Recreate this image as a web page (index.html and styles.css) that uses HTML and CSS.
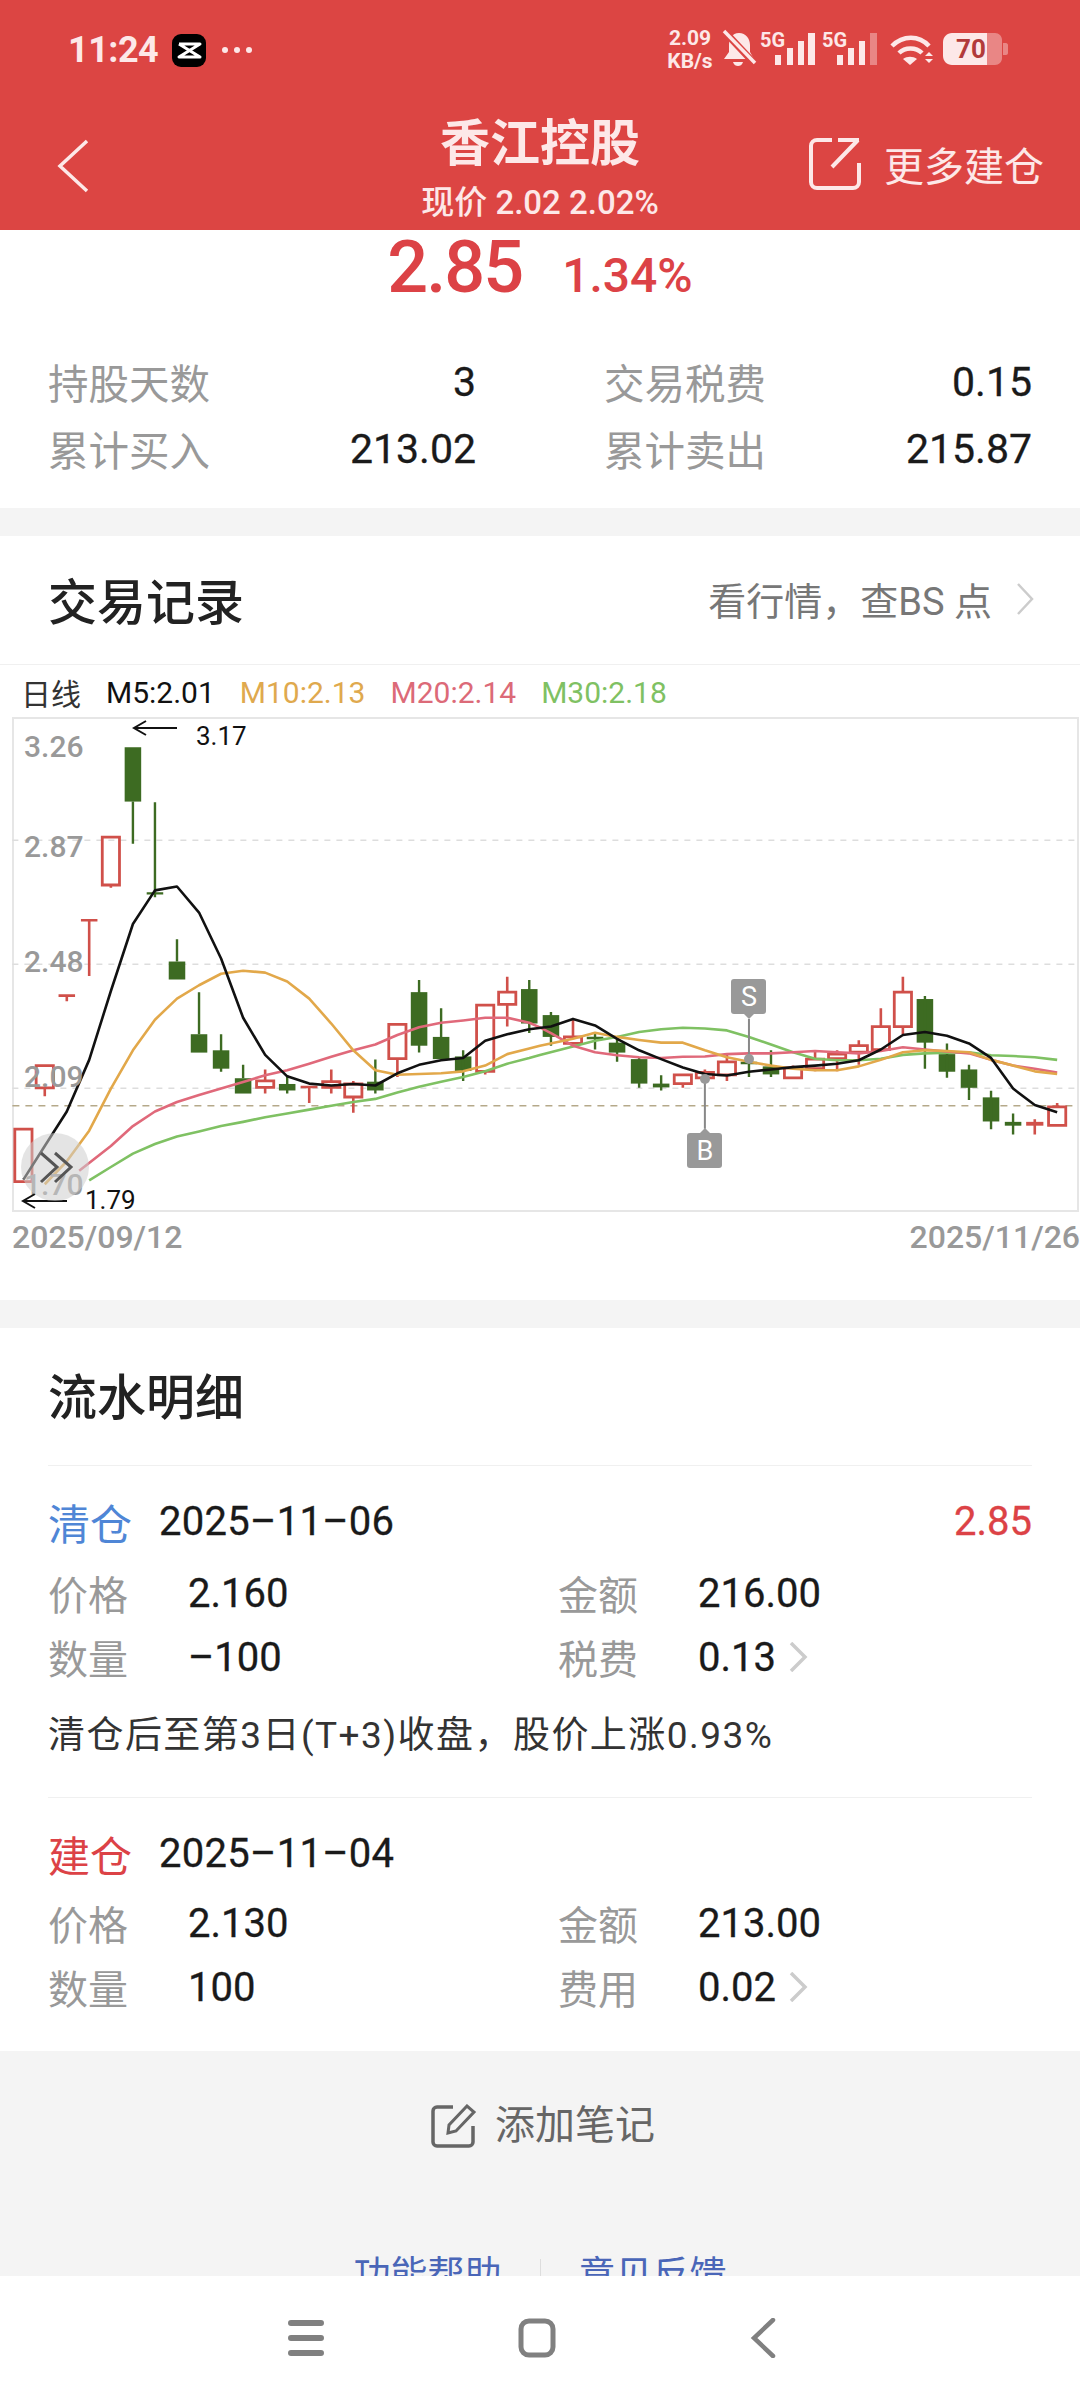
FILE: index.html
```html
<!DOCTYPE html>
<html lang="zh-CN">
<head>
<meta charset="UTF-8">
<title>香江控股</title>
<link rel="stylesheet" href="styles.css">
</head>
<body>
<div class="page">
  <header class="top">
    <div class="status">
      <div class="status-left">
        <span class="clock">11:24</span>
        <svg class="app-icon" width="34" height="33" viewBox="0 0 34 33">
          <rect width="34" height="33" rx="9" fill="#000"/>
          <path d="M7 10H28L7 23H28L7 10" fill="none" stroke="#fff" stroke-width="3" stroke-linejoin="round"/>
        </svg>
        <span class="dots"><i></i><i></i><i></i></span>
      </div>
      <svg class="status-right" width="365" height="60" viewBox="650 20 365 60">
        <text class="net" x="690" y="45" text-anchor="middle">2.09</text>
        <text class="net" x="690" y="68" text-anchor="middle">KB/s</text>
        <path d="M739 33c-7 0-10 6-10 12v7l-5 7h30l-4-7v-7c0-6-4-12-11-12z" fill="#fde8e8"/>
        <path d="M733 62c1 3 3 4 5 4s4-1 5-4z" fill="#fde8e8"/>
        <path d="M724 31L754 63" stroke="#dc4543" stroke-width="7"/>
        <path d="M724 31L755 63" stroke="#fde8e8" stroke-width="3.5"/>
        <text class="five-g" x="760" y="47">5G</text>
        <path d="M775 55h6v10h-6zM787 48h6v17h-6zM798 41h6v24h-6zM808 33h7v32h-7z" fill="#fde8e8"/>
        <text class="five-g" x="822" y="47">5G</text>
        <path d="M837 55h6v10h-6zM848 48h6v17h-6zM859 41h6v24h-6z" fill="#fde8e8"/>
        <path d="M870 33h7v32h-7z" fill="#fde8e8" opacity=".4"/>
        <path d="M892 46c11-11 27-11 37 0M899 53c6-6 17-6 23 0" fill="none" stroke="#fde8e8" stroke-width="4.5"/>
        <path d="M903 59l7 6 7-6c-4-3-10-3-14 0z" fill="#fde8e8"/>
        <path d="M925 56l4-4 4 4zM925 59h8l-4 4z" fill="#fde8e8"/>
        <path d="M987 33h8c4 0 7 3 7 7v18c0 4-3 7-7 7h-8zM1003 43h3c1 0 2 1 2 2v8c0 1-1 2-2 2h-3z" fill="#fde8e8" opacity=".4"/>
        <path d="M987 33h-35c-5 0-9 4-9 9v14c0 5 4 9 9 9h35z" fill="#fde8e8"/>
        <text class="batt" x="971" y="58" text-anchor="middle">70</text>
      </svg>
    </div>
    <div class="title-bar">
      <svg class="back" width="32" height="54" viewBox="0 0 32 54">
        <path d="M30 2L3 27L30 52" fill="none" stroke="#fde8e8" stroke-width="3.5"/>
      </svg>
      <div class="title-mid">
        <h1 class="stock">香江控股</h1>
        <p class="quote">现价 2.02 2.02%</p>
      </div>
      <div class="more">
        <svg width="54" height="54" viewBox="0 0 54 54">
          <path d="M24 3H9a6 6 0 0 0-6 6V45a6 6 0 0 0 6 6H45a6 6 0 0 0 6-6V26M24 30L50 3M30 3H51" fill="none" stroke="#fde8e8" stroke-width="4"/>
        </svg>
        <span>更多建仓</span>
      </div>
    </div>
  </header>

  <main class="content">
    <section class="summary">
      <div class="profit">
        <span class="profit-num">2.85</span>
        <span class="profit-pct">1.34%</span>
      </div>
      <div class="stats">
        <div class="stat"><span class="lbl">持股天数</span><span class="val">3</span></div>
        <div class="stat"><span class="lbl">交易税费</span><span class="val">0.15</span></div>
        <div class="stat"><span class="lbl">累计买入</span><span class="val">213.02</span></div>
        <div class="stat"><span class="lbl">累计卖出</span><span class="val">215.87</span></div>
      </div>
    </section>

    <section class="card records">
      <div class="records-head">
        <h2 class="card-title">交易记录</h2>
        <div class="records-link">
          <span>看行情，查BS 点</span>
          <svg width="18" height="34" viewBox="0 0 18 34"><path d="M2 2L16 17L2 32" fill="none" stroke="#ccc" stroke-width="2.5"/></svg>
        </div>
      </div>
      <div class="legend">
        <span class="lg-day">日线</span>
        <span class="lg-m5">M5:2.01</span>
        <span class="lg-m10">M10:2.13</span>
        <span class="lg-m20">M20:2.14</span>
        <span class="lg-m30">M30:2.18</span>
      </div>

      <svg class="chart" width="1080" height="500" viewBox="0 57 1080 500">
        <rect class="frame" x="13" y="58" width="1065" height="493"/>
        <g transform="scale(.34435 .38265)">
          <path class="grid" d="M36 471H3130M36 795H3130M36 1119H3130"/>
          <path class="price-line" d="M36 1165H3130"/>

          <g class="up">
            <rect x="43" y="1226" width="50" height="137"/>
            <rect x="105" y="1060" width="50" height="58"/>
            <rect x="297" y="463" width="50" height="125"/>
            <rect x="745" y="1100" width="50" height="17"/>
            <rect x="937" y="1102" width="50" height="15"/>
            <rect x="1001" y="1108" width="50" height="34"/>
            <rect x="1129" y="952" width="50" height="90"/>
            <rect x="1384" y="902" width="50" height="173"/>
            <rect x="1448" y="868" width="50" height="32"/>
            <rect x="1639" y="985" width="50" height="17"/>
            <rect x="1958" y="1084" width="50" height="23"/>
            <rect x="2022" y="1078" width="50" height="14"/>
            <rect x="2086" y="1050" width="50" height="34"/>
            <rect x="2278" y="1066" width="50" height="26"/>
            <rect x="2342" y="1043" width="50" height="25"/>
            <rect x="2406" y="1030" width="50" height="12"/>
            <rect x="2469" y="1008" width="50" height="17"/>
            <rect x="2533" y="958" width="50" height="60"/>
            <rect x="2597" y="868" width="50" height="90"/>
            <rect class="flat" x="2980" y="1207" width="50" height="10"/>
            <rect x="3045" y="1168" width="50" height="48"/>
            <path d="M130 1118V1140M170 877H218M194 877V892M235 680H283M259 680V826M322 588V595M770 1070V1100M770 1117V1133M873 1116H922M898 1116V1158M962 1070V1102M962 1117V1133M1026 1100V1108M1026 1142V1183M1154 1042V1090M1409 1075V1083M1473 828V868M1473 900V958M1664 938V985M1983 1107V1118M2047 1070V1078M2111 1028V1050M2111 1084V1100M2303 1060V1066M2367 1022V1043M2367 1068V1075M2431 1020V1030M2431 1042V1075M2494 994V1008M2494 1025V1058M2558 910V958M2622 828V868M2622 958V978M3005 1200V1240M3070 1158V1168"/>
          </g>

          <g class="down">
            <rect x="362" y="228" width="48" height="142"/>
            <rect x="490" y="788" width="48" height="47"/>
            <rect x="554" y="978" width="48" height="48"/>
            <rect x="618" y="1020" width="48" height="48"/>
            <rect x="682" y="1093" width="48" height="40"/>
            <rect x="810" y="1108" width="48" height="17"/>
            <rect x="1066" y="1102" width="48" height="23"/>
            <rect x="1193" y="868" width="48" height="140"/>
            <rect x="1257" y="985" width="48" height="58"/>
            <rect x="1321" y="1036" width="48" height="38"/>
            <rect x="1513" y="860" width="48" height="90"/>
            <rect x="1576" y="928" width="48" height="57"/>
            <rect x="1768" y="1000" width="48" height="26"/>
            <rect x="1832" y="1043" width="48" height="64"/>
            <rect x="1896" y="1107" width="48" height="10"/>
            <rect x="2215" y="1062" width="48" height="21"/>
            <rect x="2662" y="886" width="48" height="114"/>
            <rect x="2726" y="1030" width="48" height="46"/>
            <rect x="2790" y="1070" width="48" height="48"/>
            <rect x="2854" y="1143" width="48" height="63"/>
            <rect x="2918" y="1207" width="48" height="10"/>
            <path d="M386 370V480M426 610H474M450 372V620M514 730V788M578 868V978M642 978V1076M706 1058V1093M834 1085V1133M1090 1044V1133M1217 836V1026M1281 910V985M1345 1020V1100M1537 836V975M1600 920V1008M1704 988H1752M1728 975V1018M1792 985V1050M1856 1040V1118M1920 1085V1125M2151 1053H2199M2175 1030V1090M2239 1020V1090M2686 878V1068M2750 1002V1092M2814 1058V1150M2878 1126V1226M2942 1185V1240"/>
          </g>

          <polyline class="ma m30" points="259,1360 322,1325 386,1290 450,1265 514,1245 578,1232 642,1218 706,1207 770,1195 834,1185 898,1175 962,1165 1026,1155 1090,1147 1154,1130 1217,1115 1281,1102 1345,1090 1409,1075 1473,1055 1537,1040 1568,1032 1664,1010 1728,995 1792,985 1856,972 1920,965 1983,961 2047,963 2111,968 2175,985 2239,1005 2303,1025 2367,1042 2431,1046 2494,1046 2558,1042 2622,1032 2686,1028 2750,1026 2814,1025 2878,1033 2942,1035 3005,1038 3070,1045"/>
          <polyline class="ma m20" points="230,1335 322,1270 386,1218 450,1180 514,1155 578,1137 642,1120 706,1103 770,1085 834,1072 898,1055 962,1037 1026,1020 1090,1005 1154,980 1217,960 1281,948 1345,942 1409,935 1473,935 1537,948 1568,960 1600,975 1664,1008 1728,1025 1792,1033 1856,1038 1920,1040 1983,1037 2047,1036 2111,1030 2175,1028 2239,1028 2303,1025 2367,1022 2431,1025 2494,1028 2558,1022 2622,1012 2686,1018 2750,1023 2814,1028 2878,1045 2942,1060 3005,1068 3070,1078"/>
          <polyline class="ma m10" points="130,1370 194,1310 259,1230 322,1120 386,1020 450,940 514,885 578,850 642,820 706,812 770,817 834,840 898,885 962,950 1026,1020 1090,1072 1154,1084 1217,1082 1281,1080 1345,1075 1409,1060 1473,1030 1537,1015 1568,1008 1664,990 1728,974 1792,985 1856,993 1920,1000 1983,1000 2047,1020 2111,1038 2175,1050 2239,1060 2303,1068 2367,1072 2431,1072 2494,1062 2558,1045 2622,1025 2686,1020 2750,1022 2814,1025 2878,1045 2942,1060 3005,1075 3070,1082"/>
          <polyline class="ma m5" points="68,1358 130,1270 194,1180 259,1045 322,865 386,690 450,602 514,592 578,660 642,780 706,935 770,1032 834,1088 898,1107 962,1112 1026,1108 1090,1112 1154,1080 1217,1058 1281,1046 1345,1040 1409,995 1473,978 1537,965 1600,958 1664,938 1728,955 1792,990 1856,1020 1920,1043 1983,1065 2047,1082 2111,1086 2175,1076 2239,1070 2303,1064 2367,1060 2431,1055 2494,1046 2558,1018 2622,980 2686,972 2750,982 2814,1002 2878,1040 2942,1120 3005,1163 3070,1182"/>

          <path class="pin" d="M2175 938V1040M2047 1095V1225"/>
        </g>

        <circle class="pin-dot" cx="749" cy="399" r="5"/>
        <circle class="pin-dot" cx="705" cy="419" r="5"/>
        <rect class="tag" x="731" y="319" width="35" height="35" rx="3"/>
        <path class="tag" d="M744 354l5 5 5-5z"/>
        <text class="tag-text" x="749" y="346">S</text>
        <rect class="tag" x="687" y="473" width="35" height="35" rx="3"/>
        <path class="tag" d="M700 473l5-5 5 5z"/>
        <text class="tag-text" x="705" y="500">B</text>

        <text class="axis" x="24" y="97">3.26</text>
        <text class="axis" x="24" y="197">2.87</text>
        <text class="axis" x="24" y="312">2.48</text>
        <text class="axis" x="24" y="427">2.09</text>
        <text class="axis" x="24" y="535">1.70</text>

        <path class="arrow" d="M177 68H134M146 61L134 68L146 75"/>
        <text class="peak" x="196" y="85">3.17</text>
        <path class="arrow" d="M67 541H23M35 534L23 541L35 548"/>
        <text class="peak" x="85" y="549">1.79</text>

        <circle class="fold" cx="55" cy="507" r="34"/>
        <path class="fold-arrow" d="M41 493L57 507L41 522M55 493L71 507L55 522"/>
      </svg>

      <div class="dates"><span>2025/09/12</span><span>2025/11/26</span></div>
    </section>

    <section class="card flow">
      <h2 class="flow-title">流水明细</h2>

      <div class="trade">
        <div class="trade-head">
          <span class="kind kind-sell">清仓</span>
          <span class="trade-date">2025–11–06</span>
          <span class="trade-gain">2.85</span>
        </div>
        <div class="trade-grid">
          <span class="lbl">价格</span><span class="val">2.160</span>
          <span class="lbl">金额</span><span class="val">216.00</span>
          <span class="lbl">数量</span><span class="val">–100</span>
          <span class="lbl">税费</span>
          <span class="val">0.13
            <svg class="go" width="20" height="30" viewBox="0 0 20 30"><path d="M3 1L17 15L3 29" fill="none" stroke="#ccc" stroke-width="3.5"/></svg>
          </span>
        </div>
        <p class="trade-note">清仓后至第3日(T+3)收盘，股价上涨0.93%</p>
      </div>

      <div class="trade trade-last">
        <div class="trade-head">
          <span class="kind kind-buy">建仓</span>
          <span class="trade-date">2025–11–04</span>
        </div>
        <div class="trade-grid">
          <span class="lbl">价格</span><span class="val">2.130</span>
          <span class="lbl">金额</span><span class="val">213.00</span>
          <span class="lbl">数量</span><span class="val">100</span>
          <span class="lbl">费用</span>
          <span class="val">0.02
            <svg class="go" width="20" height="30" viewBox="0 0 20 30"><path d="M3 1L17 15L3 29" fill="none" stroke="#ccc" stroke-width="3.5"/></svg>
          </span>
        </div>
      </div>
    </section>

    <section class="bottom">
      <div class="add-note">
        <svg width="46" height="44" viewBox="0 0 46 44">
          <path d="M22 3H6a4 4 0 0 0-4 4V38a4 4 0 0 0 4 4H38a4 4 0 0 0 4-4V22" fill="none" stroke="#666" stroke-width="3.5"/>
          <path d="M17 29L18 21L36 2L43 8L25 27z" fill="none" stroke="#666" stroke-width="3"/>
        </svg>
        <span>添加笔记</span>
      </div>
      <div class="help-links">
        <span>功能帮助</span>
        <i></i>
        <span>意见反馈</span>
      </div>
    </section>
  </main>

  <nav class="sys-nav">
    <svg width="36" height="36" viewBox="0 0 36 36">
      <path d="M3 3H33M3 18H33M3 33H33" stroke="#808080" stroke-width="6" stroke-linecap="round"/>
    </svg>
    <svg width="38" height="40" viewBox="0 0 38 40">
      <rect x="3" y="3" width="32" height="34" rx="8" fill="none" stroke="#808080" stroke-width="5"/>
    </svg>
    <svg width="26" height="40" viewBox="0 0 26 40">
      <path d="M23 2L4 20L23 38" fill="none" stroke="#808080" stroke-width="4.5" stroke-linecap="round"/>
    </svg>
  </nav>
</div>
</body>
</html>
```

FILE: styles.css
```css
body {
  margin: 0;
  font-family: Roboto, "Noto Sans CJK SC", sans-serif;
  background: #fff;
  color: #222;
}

h1, h2, p {
  margin: 0;
}

.page {
  width: 1080px;
  height: 2400px;
  display: flex;
  flex-direction: column;
  overflow: hidden;
}

/* red header */
.top {
  height: 230px;
  flex-shrink: 0;
  background: #dc4543;
  color: #fde8e8;
}

.status {
  height: 100px;
  display: flex;
  justify-content: space-between;
  align-items: center;
  padding: 0 65px 0 68px;
}

.status-left {
  display: flex;
  align-items: center;
}

.clock {
  font-size: 36px;
  font-weight: 700;
  letter-spacing: -0.5px;
  margin-right: 14px;
}

.dots {
  display: flex;
  gap: 6px;
  margin-left: 16px;
}

.dots i {
  width: 6px;
  height: 6px;
  border-radius: 50%;
  background: #fde8e8;
}

.status-right text {
  fill: #fde8e8;
  font-weight: 700;
}

.status-right .net {
  font-size: 21px;
}

.status-right .five-g {
  font-size: 20px;
}

.status-right .batt {
  font-size: 26px;
  fill: #b23a3a;
}

.title-bar {
  height: 130px;
  display: grid;
  grid-template-columns: 1fr auto 1fr;
  align-items: center;
  padding: 0 36px;
}

.back {
  margin: 1px 0 0 21px;
}

.title-mid {
  text-align: center;
}

.stock {
  font-size: 50px;
  font-weight: 700;
  line-height: 74px;
}

.quote {
  font-size: 33px;
  font-weight: 500;
  line-height: 40px;
  margin-top: 2px;
}

.more {
  display: flex;
  justify-content: flex-end;
  align-items: center;
  gap: 22px;
  font-size: 40px;
  margin-top: -2px;
}

.content {
  flex: 1;
  min-height: 0;
  background: #f4f4f4;
}

.card {
  background: #fff;
  margin-bottom: 28px;
}

/* summary */
.summary {
  height: 278px;
  background: #fff;
  margin-bottom: 28px;
}

.profit {
  height: 76px;
  display: flex;
  justify-content: center;
  align-items: baseline;
  gap: 40px;
  color: #dc4246;
  font-weight: 500;
}

.profit-num {
  font-size: 72px;
  line-height: 76px;
  letter-spacing: -2px;
}

.profit-pct {
  font-size: 48px;
}

.stats {
  display: grid;
  grid-template-columns: 428px 428px;
  grid-auto-rows: 67px;
  justify-content: space-between;
  padding: 0 48px;
  margin-top: 42px;
}

.stat {
  display: flex;
  justify-content: space-between;
  align-items: center;
}

.lbl {
  font-size: 40.5px;
  color: #999;
}

.val {
  font-size: 41px;
  color: #1a1a1a;
  -webkit-text-stroke: 0.3px #1a1a1a;
}

/* trade records + chart */
.records {
  height: 764px;
}

.records-head {
  height: 129px;
  display: flex;
  justify-content: space-between;
  align-items: center;
  padding: 0 46px 3px 48px;
  border-bottom: 1px solid #f0f0f0;
  box-sizing: border-box;
}

.card-title,
.flow-title {
  font-size: 49px;
  font-weight: 500;
  color: #222;
}

.records-link {
  display: flex;
  align-items: center;
  gap: 24px;
  font-size: 38px;
  color: #777;
}

.legend {
  height: 52px;
  box-sizing: border-box;
  padding: 2px 0 0 21px;
  display: flex;
  align-items: center;
  gap: 25px;
  font-size: 30px;
}

.lg-day { color: #333; }
.lg-m5 { color: #111; }
.lg-m10 { color: #dfa94e; }
.lg-m20 { color: #dc6a78; }
.lg-m30 { color: #7fc163; }

.chart {
  display: block;
}

.frame {
  fill: none;
  stroke: #e6e6e6;
  stroke-width: 2;
}

.chart g * {
  vector-effect: non-scaling-stroke;
}

.grid {
  stroke: #ddd;
  stroke-width: 1.5;
  stroke-dasharray: 6 6;
}

.price-line {
  stroke: #b5a98a;
  stroke-width: 1.5;
  stroke-dasharray: 7 6;
}

.up rect {
  fill: none;
  stroke: #d0504a;
  stroke-width: 2.8;
}

.up .flat {
  fill: #d0504a;
  stroke: none;
}

.up path {
  fill: none;
  stroke: #d0504a;
  stroke-width: 2.6;
}

.down rect {
  fill: #3d6b22;
}

.down path {
  fill: none;
  stroke: #3d6b22;
  stroke-width: 2.4;
}

.ma {
  fill: none;
  stroke-width: 2.6;
  stroke-linejoin: round;
}

.m5 { stroke: #111; }
.m10 { stroke: #e2a84a; }
.m20 { stroke: #e0697a; }
.m30 { stroke: #7fc163; }

.pin {
  fill: none;
  stroke: #888;
  stroke-width: 2;
}

.pin-dot,
.tag {
  fill: #999;
}

.tag-text {
  font-size: 27px;
  fill: #fff;
  text-anchor: middle;
}

.axis {
  font-size: 30px;
  font-weight: 500;
  fill: #999;
}

.peak {
  font-size: 26px;
  fill: #111;
}

.arrow {
  fill: none;
  stroke: #111;
  stroke-width: 2;
}

.fold {
  fill: rgba(205, 205, 205, 0.55);
}

.fold-arrow {
  fill: none;
  stroke: #555;
  stroke-width: 3;
}

.dates {
  display: flex;
  justify-content: space-between;
  padding: 0 0 0 12px;
  font-size: 32px;
  font-weight: 500;
  line-height: 40px;
  color: #999;
}

/* flow list */
.flow {
  height: 723px;
  margin-bottom: 0;
  padding: 0 48px;
  box-sizing: border-box;
}

.flow-title {
  height: 138px;
  line-height: 142px;
  border-bottom: 1px solid #f0f0f0;
  box-sizing: border-box;
}

.trade {
  padding: 23px 0 36px;
  border-bottom: 1px solid #f0f0f0;
}

.trade-last {
  border-bottom: none;
}

.trade-last .trade-grid {
  margin-top: 6px;
}

.trade-head {
  height: 64px;
  display: flex;
  align-items: center;
}

.kind {
  font-size: 42px;
  width: 111px;
}

.kind-sell { color: #4f86d6; }
.kind-buy { color: #dc4246; }

.trade-date {
  font-size: 40px;
  color: #1a1a1a;
  -webkit-text-stroke: 0.3px #1a1a1a;
  letter-spacing: 0.3px;
}

.trade-gain {
  margin-left: auto;
  font-size: 40px;
  color: #dc4246;
  -webkit-text-stroke: 0.3px #dc4246;
}

.trade-grid {
  display: grid;
  grid-template-columns: 140px 370px 140px auto;
  grid-auto-rows: 64px;
  align-items: center;
  margin-top: 8px;
}

.trade-grid .lbl,
.trade-grid .val {
  font-size: 40px;
}

.trade-grid .val {
  display: flex;
  align-items: center;
  gap: 12px;
}

.trade-note {
  font-size: 37px;
  letter-spacing: 1.45px;
  line-height: 50px;
  color: #333;
  margin-top: 22px;
}

/* bottom area */
.add-note {
  display: flex;
  justify-content: center;
  align-items: center;
  gap: 18px;
  padding: 51px 0 0 6px;
  font-size: 40px;
  line-height: 48px;
  color: #666;
}

.help-links {
  display: flex;
  justify-content: center;
  align-items: center;
  gap: 38px;
  margin-top: 100px;
  font-size: 37px;
  line-height: 52px;
  color: #4a66b8;
}

.help-links i {
  width: 1px;
  height: 34px;
  background: #ddd;
}

/* sits over the cut-off help links */
.sys-nav {
  position: relative;
  height: 124px;
  flex-shrink: 0;
  background: #fff;
  display: flex;
  justify-content: center;
  align-items: center;
  gap: 194px;
  padding-right: 16px;
}
```
